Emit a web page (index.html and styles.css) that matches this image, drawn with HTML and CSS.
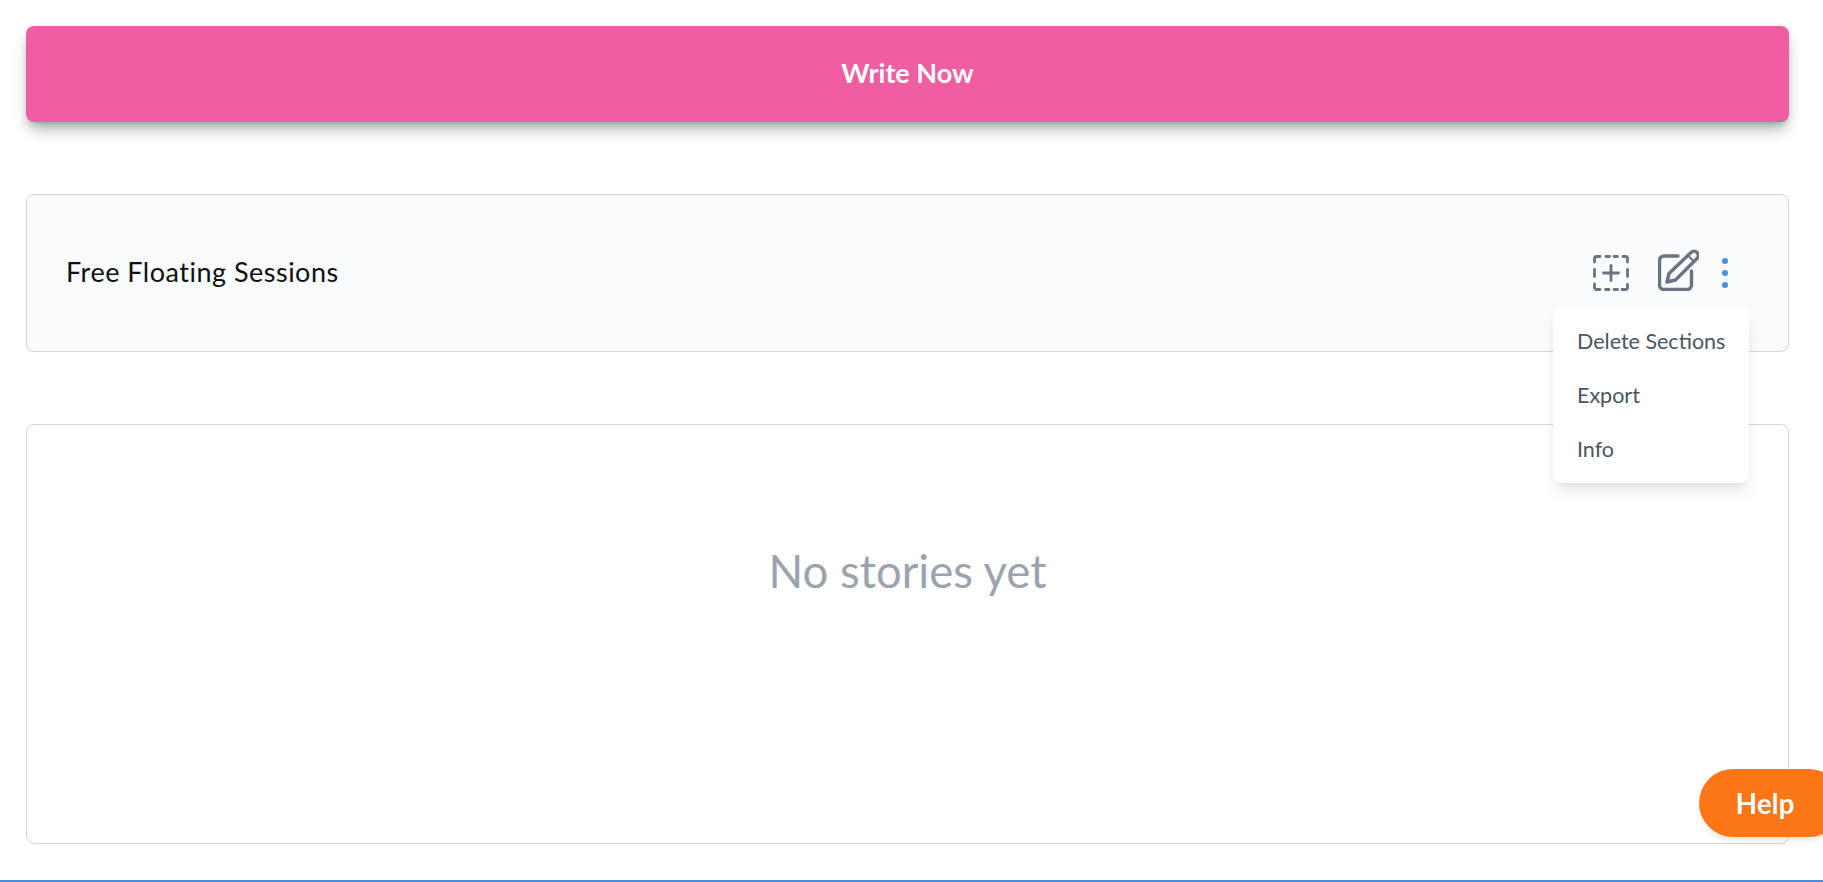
FILE: index.html
```html
<!DOCTYPE html>
<html lang="en">
<head>
  <meta charset="UTF-8"/>
  <meta name="viewport" content="width=device-width,initial-scale=1.0"/>
  <title>Free Floating Sessions</title>
  <link rel="stylesheet" href="styles.css">
</head>
<body>

<main class="page">
  <button class="write-btn" type="button">Write Now</button>

  <section class="section-card">
    <h2 class="section-title">Free Floating Sessions</h2>
    <div class="section-actions">
      <svg class="icon-add" viewBox="0 0 36 36" fill="none" stroke="#6b7280" stroke-width="2.800" stroke-linecap="round" stroke-linejoin="round">
        <path d="M1.500 7V3.500a2 2 0 0 1 2-2H7M13 1.500h3.500M21 1.500h3.500M30 1.500h2.500a2 2 0 0 1 2 2V7M34.500 14.500v7M34.500 29.500v3a2 2 0 0 1-2 2H29M24.500 34.500H21M16 34.500h-3.500M7 34.500H3.500a2 2 0 0 1-2-2V29M1.500 21.500v-7"/>
        <path d="M18 10.500v15M10.500 18h15"/>
      </svg>
      <svg class="icon-edit" viewBox="0 0 41 42" fill="none" stroke="#6b7280" stroke-width="3.400" stroke-linecap="round" stroke-linejoin="round">
        <path d="M20 7H6a4.500 4.500 0 0 0-4.500 4.500V36A4.500 4.500 0 0 0 6 40.500h23a4.500 4.500 0 0 0 4.500-4.500V22"/>
        <path d="M33 3.500a4.200 4.200 0 0 1 6 6L17.500 31 9 33l2-8.500z"/>
        <path d="M30 6.500l6 6" stroke-width="2"/>
      </svg>
      <span class="dots"><i></i><i></i><i></i></span>
    </div>

    <ul class="menu">
      <li>Delete Sections</li>
      <li>Export</li>
      <li>Info</li>
    </ul>
  </section>

  <section class="stories-card">
    <p class="empty-text">No stories yet</p>
  </section>
</main>

<button class="help-btn" type="button">Help</button>

</body>
</html>
```

FILE: styles.css
```css
* {
  margin: 0;
  padding: 0;
  box-sizing: border-box;
}

body {
  font-family: Lato, "Noto Sans", Arial, sans-serif;
  background: #fff;
  overflow: hidden;
}

.page {
  height: 882px;
  padding: 26px 34px 0 26px;
  border-bottom: 2px solid #4a8ede;
}

.write-btn {
  display: block;
  width: 100%;
  height: 96px;
  padding-bottom: 3px;
  background: #ef5da2;
  color: #fff;
  font-family: inherit;
  font-size: 27px;
  font-weight: 700;
  border: none;
  border-radius: 8px;
  box-shadow: 0 10px 15px -3px rgba(0, 0, 0, 0.3), 0 4px 6px -2px rgba(0, 0, 0, 0.15);
}

.section-card {
  position: relative;
  display: flex;
  align-items: center;
  justify-content: space-between;
  height: 158px;
  margin-top: 72px;
  padding: 0 60px 0 39px;
  background: #f9fbfd;
  border: 1px solid #d1d5db;
  border-radius: 8px;
}

.section-title {
  padding-bottom: 4px;
  font-size: 27px;
  font-weight: 400;
  letter-spacing: 0.5px;
  color: #111;
}

.section-actions {
  display: flex;
  align-items: center;
}

.icon-add {
  width: 36px;
  height: 36px;
}

.icon-edit {
  width: 41px;
  height: 42px;
  margin: -6px 0 0 29px;
}

.dots {
  display: flex;
  flex-direction: column;
  gap: 6px;
  margin-left: 23px;
}

.dots i {
  display: block;
  width: 6px;
  height: 6px;
  border-radius: 50%;
  background: #4a8ede;
}

.menu {
  position: absolute;
  top: 113px;
  right: 39px;
  width: 196px;
  height: 175px;
  padding: 6px 0;
  list-style: none;
  background: #fff;
  border-radius: 8px;
  box-shadow: 0 10px 15px -3px rgba(0, 0, 0, 0.1), 0 4px 6px -2px rgba(0, 0, 0, 0.05);
  z-index: 5;
}

.menu li {
  height: 54px;
  padding-left: 24px;
  line-height: 54px;
  font-size: 21.5px;
  color: #4b5563;
}

.stories-card {
  display: flex;
  align-items: center;
  justify-content: center;
  height: 420px;
  margin-top: 72px;
  border: 1px solid #d1d5db;
  border-radius: 8px;
}

.empty-text {
  margin-top: -128px;
  font-size: 45.5px;
  color: #9ca3af;
}

.help-btn {
  position: fixed;
  top: 769px;
  right: -20px;
  width: 144px;
  height: 68px;
  padding-right: 12px;
  background: #fd7618;
  color: #fff;
  font-family: inherit;
  font-size: 28px;
  font-weight: 700;
  border: none;
  border-radius: 34px;
  box-shadow: 0 4px 6px -1px rgba(0, 0, 0, 0.1);
}
```
